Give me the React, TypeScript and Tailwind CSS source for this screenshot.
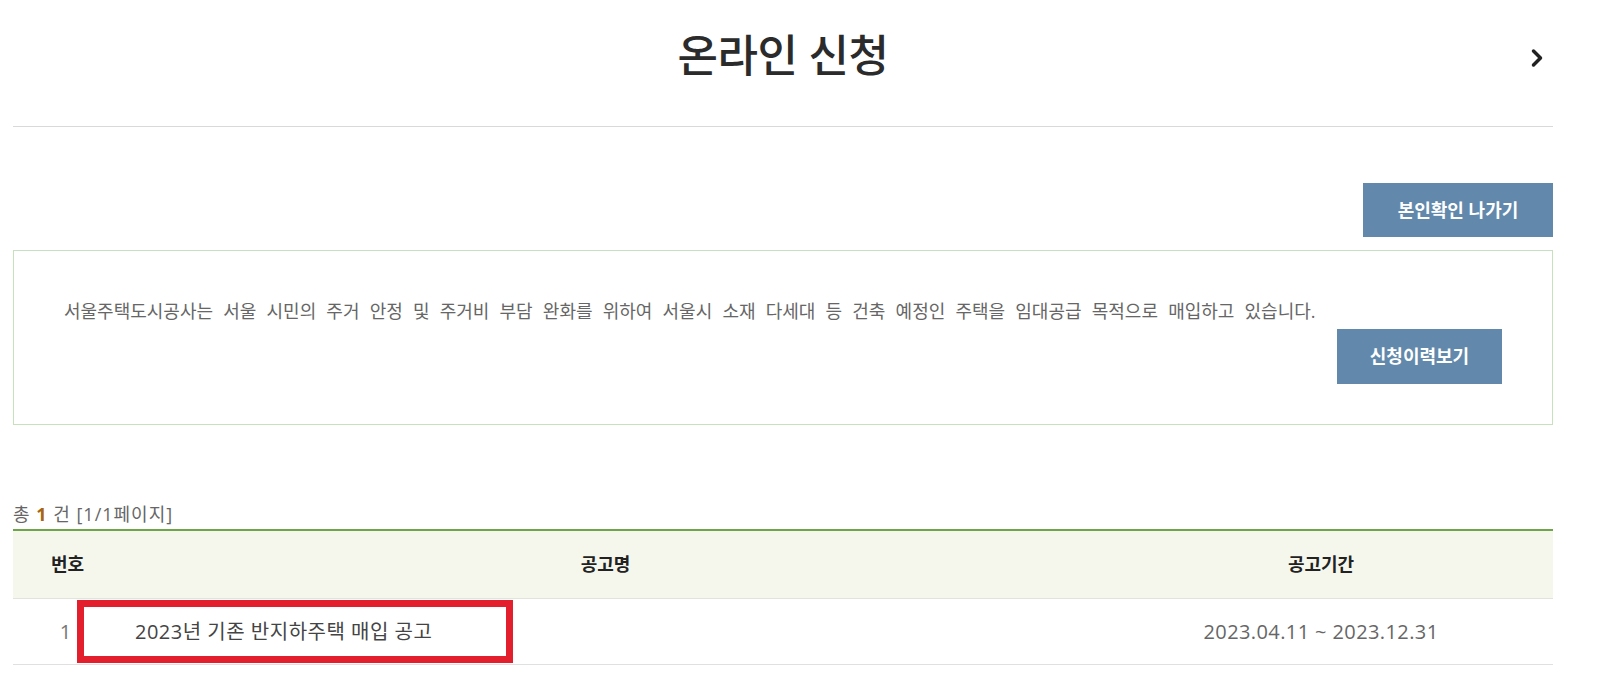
import { ChevronRight } from 'lucide-react'

const FONT = "font-['Open_Sans','Noto_Sans_CJK_KR',sans-serif]"

export default function App() {
  return (
    <div className={`w-[1619px] h-[692px] bg-white overflow-hidden ${FONT}`}>
      <div className="ml-[13px] w-[1540px]">
        {/* Page title */}
        <div className="grid grid-cols-[1fr_auto_1fr] h-[127px] pt-[26px] border-b border-[#d9d9d9]">
          <div />
          <h1 className="text-[44px] leading-[58px] font-medium text-[#2b2b2b] tracking-[-0.5px]">온라인 신청</h1>
          <div className="flex justify-end pr-[2px] pt-[16px]">
            <ChevronRight className="w-[28px] h-[32px] text-[#222]" strokeWidth={3} />
          </div>
        </div>

        <div className="flex justify-end mt-[56px]">
          <button className="w-[190px] h-[54px] bg-[#6289ab] text-white text-[18px] font-bold">본인확인 나가기</button>
        </div>

        {/* Intro box */}
        <div className="mt-[13px] h-[175px] border border-[#c9e0bf] pt-[46px] px-[50px]">
          <p className="text-[18px] leading-[28px] text-[#666] [word-spacing:5.5px]">
            서울주택도시공사는 서울 시민의 주거 안정 및 주거비 부담 완화를 위하여 서울시 소재 다세대 등 건축 예정인 주택을 임대공급 목적으로 매입하고 있습니다.
          </p>
          <div className="flex justify-end mt-[4px]">
            <button className="w-[165px] h-[55px] bg-[#6289ab] text-white text-[18px] font-bold">신청이력보기</button>
          </div>
        </div>

        {/* Count */}
        <div className="mt-[77px] h-[24px] leading-[24px] text-[18px] text-[#666] tracking-[1px]">
          총 <span className="font-bold text-[#a8650f]">1</span> 건 [1/1페이지]
        </div>

        {/* Table */}
        <div className="mt-[3px] border-t-2 border-[#6ea54a]">
          <div className="grid grid-cols-[109px_967px_464px] h-[68px] items-center bg-[#f5f7ed] border-b border-[#e2e4dc] text-[18px] font-bold text-[#222]">
            <div className="text-center">번호</div>
            <div className="text-center">공고명</div>
            <div className="text-center">공고기간</div>
          </div>
          <div className="relative grid grid-cols-[109px_967px_464px] h-[66px] items-center border-b border-[#e0e0e0] text-[20px]">
            <div className="text-center text-[#777] pr-[4px]">1</div>
            <div className="pl-[13px] text-[#444] tracking-[0.5px]">2023년 기존 반지하주택 매입 공고</div>
            <div className="text-center text-[#666] tracking-[0.4px]">2023.04.11 ~ 2023.12.31</div>
            <div className="absolute left-[64px] top-[1px] w-[436px] h-[63px] border-[7px] border-[#e31e2d]" />
          </div>
        </div>
      </div>
    </div>
  )
}
